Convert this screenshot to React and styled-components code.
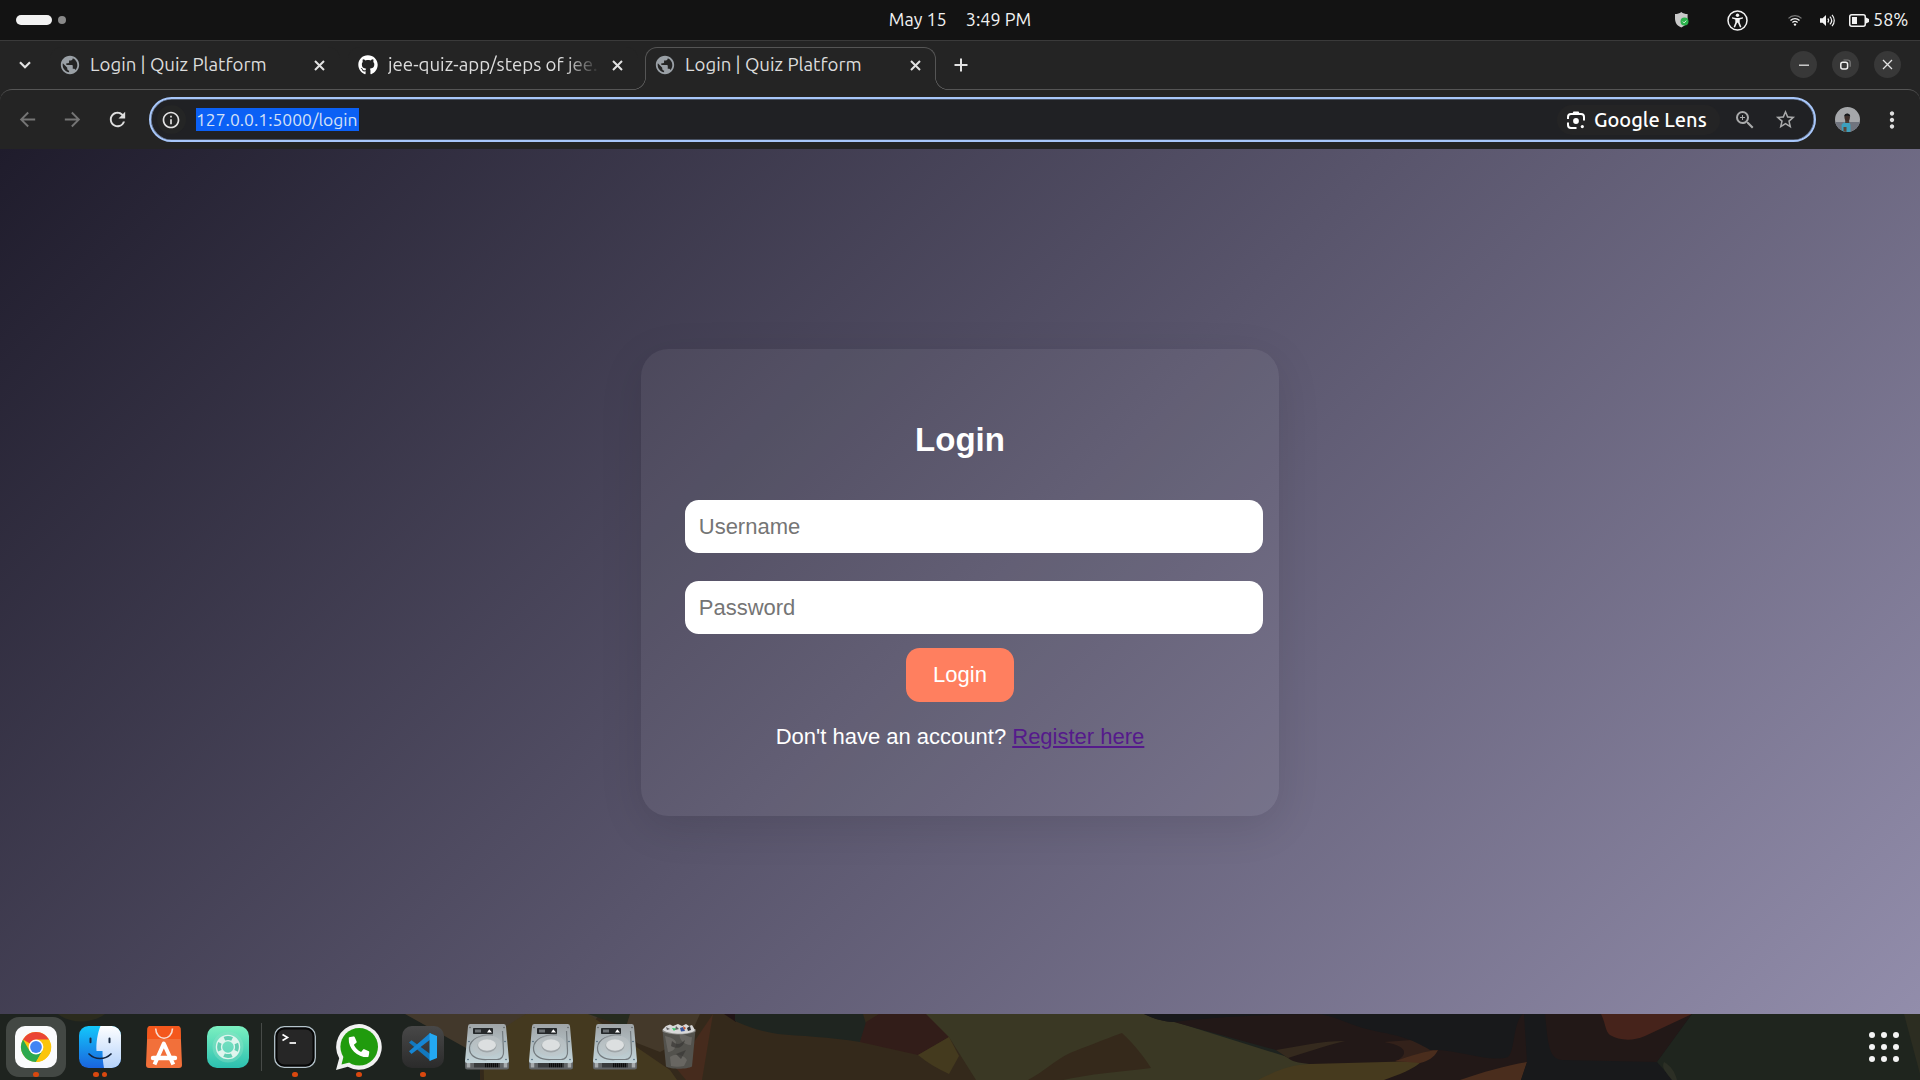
import React from "react";
import styled, { createGlobalStyle } from "styled-components";
import {
  MdArrowBack, MdArrowForward, MdRefresh, MdPublic, MdInfoOutline,
  MdZoomIn, MdStarOutline, MdMoreVert,
} from "react-icons/md";
import { FaGithub, FaPhoneAlt } from "react-icons/fa";

const Global = createGlobalStyle`
  html, body { margin: 0; padding: 0; background: #1e231f; overflow: hidden; }
  *, *::before, *::after { box-sizing: border-box; }
  svg { display: block; flex: none; }
`;

const Screen = styled.div`
  display: flex;
  flex-direction: column;
  width: 1920px;
  height: 1080px;
  overflow: hidden;
  font-family: Ubuntu, "Noto Sans", sans-serif;
  color: #dedede;
`;

/* ---------- system bar ---------- */
const TopBar = styled.header`
  display: grid;
  grid-template-columns: 1fr auto 1fr;
  align-items: center;
  height: 41px;
  flex: none;
  background: #131313;
  border-bottom: 1px solid #3a3a3a;
`;
const Workspaces = styled.div`
  display: flex;
  align-items: center;
  gap: 6px;
  padding-left: 16px;
`;
const Workspace = styled.span`
  width: ${(p) => (p.$current ? 36 : 8)}px;
  height: ${(p) => (p.$current ? 10 : 8)}px;
  border-radius: 5px;
  background: ${(p) => (p.$current ? "#f2f2f2" : "#8a8a8a")};
`;
const Clock = styled.div`
  display: flex;
  gap: 19px;
  padding-bottom: 2px;
  font-size: 18px;
  line-height: 24px;
  color: #f2f2f2;
`;
const ClockPart = styled.span`
  white-space: nowrap;
`;
const Tray = styled.div`
  display: flex;
  align-items: center;
  justify-content: flex-end;
  padding-right: 12px;
  color: #f2f2f2;
`;
const TrayItem = styled.span`
  display: flex;
  margin-right: ${(p) => p.$gap}px;
`;
const Percent = styled.span`
  width: 35px;
  padding-bottom: 2px;
  font-size: 18px;
  line-height: 24px;
  white-space: nowrap;
`;

/* ---------- tab strip ---------- */
const TabStrip = styled.div`
  display: flex;
  align-items: flex-start;
  height: 48px;
  flex: none;
  padding-top: 6px;
  background: #242424;
`;
const TabSearch = styled.div`
  display: flex;
  align-items: center;
  justify-content: center;
  width: 50px;
  height: 36px;
`;
const Tab = styled.div`
  position: relative;
  display: flex;
  align-items: center;
  width: ${(p) => (p.$active ? 291 : 290)}px;
  height: ${(p) => (p.$active ? 43 : 42)}px;
  margin-right: ${(p) => p.$gap || 0}px;
  padding: 0 14px ${(p) => (p.$active ? 8 : 7)}px 9px;
  border: 1px solid ${(p) => (p.$active ? "#555555" : "transparent")};
  border-bottom: 0;
  border-radius: 12px 12px 0 0;
  background: #242424;
  z-index: ${(p) => (p.$active ? 2 : 0)};

  &::before,
  &::after {
    content: "";
    display: ${(p) => (p.$active ? "block" : "none")};
    position: absolute;
    bottom: 0;
    width: 13px;
    height: 13px;
  }
  &::before {
    left: -13px;
    background: radial-gradient(circle at 0 0, #242424 11.8px, #555555 12.3px, #555555 12.7px, #242424 13.2px);
  }
  &::after {
    right: -13px;
    background: radial-gradient(circle at 100% 0, #242424 11.8px, #555555 12.3px, #555555 12.7px, #242424 13.2px);
  }
`;
const Favicon = styled.span`
  display: flex;
  justify-content: center;
  width: 20px;
  flex: none;
  color: ${(p) => p.$color};
`;
const TabTitle = styled.span`
  flex: 1;
  margin: 0 10px;
  overflow: hidden;
  white-space: nowrap;
  font-size: 18.67px;
  line-height: 26px;
  color: #dcdcdc;
  mask-image: ${(p) => (p.$fade ? "linear-gradient(90deg, #000 83%, transparent 99%)" : "none")};
`;
const NewTab = styled.div`
  display: flex;
  align-items: center;
  height: 36px;
  padding-left: 18px;
`;
const WindowButtons = styled.div`
  display: flex;
  align-items: center;
  gap: 15px;
  height: 35px;
  margin-left: auto;
  padding-right: 19px;
`;
const WindowButton = styled.span`
  display: flex;
  align-items: center;
  justify-content: center;
  width: 27px;
  height: 27px;
  border-radius: 50%;
  background: #383838;
`;

/* ---------- toolbar ---------- */
const ToolbarBack = styled.div`
  background: #242424;
  flex: none;
`;
const Toolbar = styled.div`
  display: flex;
  align-items: center;
  height: 60px;
  padding: 0 0 0 16px;
  border: 1px solid #555555;
  border-width: 1px 0 0;
  border-radius: 12px 12px 0 0;
`;
const NavIcon = styled.span`
  display: flex;
  flex: none;
  width: 24px;
  margin-right: ${(p) => p.$gap}px;
  color: ${(p) => (p.$off ? "#757575" : "#dedede")};
`;
const Omnibox = styled.div`
  display: flex;
  align-items: center;
  flex: none;
  width: 1667px;
  height: 45px;
  padding: 0 17px 0 6px;
  border: 2px solid #a8c7fa;
  border-radius: 23px;
  background: #202124;
  box-shadow: inset 0 0 0 0.6px rgba(168, 199, 250, 0.6);
`;
const SiteInfo = styled.span`
  display: flex;
  align-items: center;
  justify-content: center;
  width: 29px;
  height: 29px;
  margin-right: 10px;
  padding-right: 1px;
  border-radius: 50%;
  background: #242525;
`;
const Url = styled.span`
  width: 163px;
  height: 23px;
  background: #0b60f5;
  color: #d5e1f7;
  font-size: 17.5px;
  line-height: 23px;
  white-space: nowrap;
`;
const LensChip = styled.span`
  display: flex;
  align-items: center;
  gap: 9px;
  width: 163px;
  height: 30px;
  margin-left: auto;
  margin-right: 13px;
  padding-left: 10px;
  border-radius: 15px;
  background: #242425;
  color: #ffffff;
  font-size: 20px;
  font-weight: 500;
  white-space: nowrap;
`;
const OmniIcon = styled.span`
  display: flex;
  margin-left: ${(p) => p.$gap || 0}px;
  color: #a9aaab;
`;
const Avatar = styled.span`
  display: flex;
  flex: none;
  width: 25px;
  height: 25px;
  margin-left: 19px;
  border-radius: 50%;
  overflow: hidden;
`;
const Menu = styled.span`
  display: flex;
  margin-left: 19px;
  color: #dedede;
`;

/* ---------- page ---------- */
const Page = styled.main`
  display: flex;
  align-items: center;
  justify-content: center;
  flex: 1;
  padding-top: 2px;
  background: linear-gradient(135deg, #1f1c2c, #928dab);
  font-family: "Liberation Sans", Arial, sans-serif;
  color: #ffffff;
`;
const Card = styled.section`
  width: 638px;
  height: 467px;
  padding: 44px;
  border-radius: 27.5px;
  background: rgba(255, 255, 255, 0.055);
  box-shadow: 0 11px 44px rgba(0, 0, 0, 0.1);
  text-align: center;
`;
const Heading = styled.h2`
  margin: 28.4px 0 26.4px;
  font-size: 33px;
  line-height: 38px;
`;
const Field = styled.input`
  display: block;
  box-sizing: content-box;
  width: 100%;
  height: 25px;
  margin: ${(p) => p.$top}px 0 0;
  padding: 15px 13.75px 13px;
  border: 0;
  border-radius: 13.75px;
  background: #ffffff;
  font: 22px "Liberation Sans", Arial, sans-serif;
  &::placeholder { color: #757575; opacity: 1; }
`;
const Submit = styled.button`
  height: 54px;
  margin-top: 14px;
  padding: 0 27px;
  border: 0;
  border-radius: 13.75px;
  background: #ff7f5f;
  color: #ffffff;
  font: 22px "Liberation Sans", Arial, sans-serif;
`;
const Note = styled.p`
  margin: 22px 0 0;
  font-size: 22px;
  line-height: 25px;
`;
const Link = styled.a`
  color: #551a8b;
  text-decoration: underline;
`;

/* ---------- dock ---------- */
const Dock = styled.footer`
  position: relative;
  display: flex;
  align-items: stretch;
  height: 66px;
  flex: none;
  padding: 0 17px 0 4px;
  background: #1e231f;
`;
const Wallpaper = styled.svg`
  position: absolute;
  inset: 0;
`;
const DockItem = styled.div`
  position: relative;
  display: flex;
  flex-direction: column;
  align-items: center;
  width: 60px;
  height: 60px;
  margin: 3px 2px;
  padding-top: 6px;
  border-radius: 13px;
  background: ${(p) => (p.$focused ? "rgba(255,255,255,0.17)" : "transparent")};
`;
const IconBox = styled.span`
  display: flex;
  justify-content: center;
  height: 45.5px;
  padding-top: ${(p) => (p.$tall ? 1 : 3)}px;
  margin-bottom: 3px;
`;
const Dots = styled.span`
  display: flex;
  gap: 3px;
`;
const Dot = styled.span`
  width: 5.5px;
  height: 5.5px;
  border-radius: 50%;
  background: #d9480f;
`;
const Separator = styled.span`
  position: relative;
  width: 1px;
  height: 48px;
  margin: 9px 1px 0;
  background: #474b48;
`;
const AppGrid = styled.span`
  position: relative;
  display: grid;
  grid-template-columns: repeat(3, 6px);
  gap: 6.2px;
  align-content: center;
  margin-left: auto;
  padding-right: 4px;
`;
const GridDot = styled.span`
  width: 6px;
  height: 6px;
  border-radius: 50%;
  background: #f4f4f4;
`;

/* ---------- drawings ---------- */
const Cross = ({ size = 11, w = 2 }) => (
  <svg width={size} height={size} viewBox="0 0 11 11" stroke="#e2e2e2" strokeWidth={w} fill="none">
    <path d="M1 1 10 10M10 1 1 10" />
  </svg>
);

const Shield = () => (
  <svg width="14" height="16" viewBox="0 0 14 16">
    <path d="M6.3 0C4.600 1.400 2.400 2 0 2v4.500C0 11 2.500 14 6.300 15.500 10 14 12.600 11 12.600 6.500V2C10.200 2 8 1.400 6.300 0Z" fill="#c9c9c9" />
    <circle cx="9.500" cy="9.600" r="4" fill="#2bb24c" />
    <path d="m7.800 9.600 1.300 1.300 2.200-2.300" stroke="#d8f5de" fill="none" />
  </svg>
);
const Access = () => (
  <svg width="21" height="21" viewBox="0 0 21 21">
    <circle cx="10.500" cy="10.500" r="9.500" fill="none" stroke="#f2f2f2" strokeWidth="1.500" />
    <circle cx="10.500" cy="5.300" r="1.700" fill="#f2f2f2" />
    <path d="M5 7.300 9 8.100h3L16 7.300v1.300l-3.300.9v3l1.700 4.400-1.400.5-2.100-4.600h-.8L8 17.400l-1.400-.5 1.700-4.400v-3L5 8.600Z" fill="#f2f2f2" />
  </svg>
);
const Wifi = () => (
  <svg width="14" height="11" viewBox="0 0 14 11" fill="none" strokeWidth="1.300">
    <path d="M.5 3.400C4-.2 10-.2 13.500 3.400" stroke="#777" />
    <path d="M2.500 5.500C5 3 9 3 11.500 5.500" stroke="#f2f2f2" />
    <path d="M4.400 7.600c1.500-1.400 3.700-1.400 5.200 0" stroke="#f2f2f2" />
    <circle cx="7" cy="9.600" r="1.200" fill="#f2f2f2" />
  </svg>
);
const Volume = () => (
  <svg width="15" height="13" viewBox="0 0 15 13" fill="none" stroke="#f2f2f2" strokeWidth="1.200">
    <path d="M0 4.200h2.600L6 1v11L2.600 8.800H0Z" fill="#f2f2f2" stroke="none" />
    <path d="M7.800 4.500c1 1.200 1 2.800 0 4M9.900 2.600c2.100 2.300 2.100 5.500 0 7.800M12 .8c3 3.300 3 8.100 0 11.400" />
  </svg>
);
const Battery = () => (
  <svg width="20" height="13" viewBox="0 0 20 13">
    <rect x=".75" y=".75" width="15.500" height="11.500" rx="2" fill="none" stroke="#f2f2f2" strokeWidth="1.500" />
    <rect x="3" y="3" width="5" height="7" fill="#f2f2f2" />
    <path d="M17 3.500 20 5v3l-3 1.500Z" fill="#f2f2f2" />
  </svg>
);
const LensIcon = () => (
  <svg width="18" height="18" viewBox="0 0 18 18" fill="none" stroke="#fff" strokeWidth="2">
    <path d="M1 8V6a3 3 0 0 1 3-3h10a3 3 0 0 1 3 3v3.500M1 11.500V14a3 3 0 0 0 3 3h5.500" />
    <path d="M6.500.6h5L13 3H5Z" fill="#fff" stroke="none" />
    <circle cx="9" cy="10" r="2.900" fill="#fff" stroke="none" />
    <circle cx="15.300" cy="15.600" r="1.600" fill="#fff" stroke="none" />
  </svg>
);
const AvatarPicture = () => (
  <svg width="25" height="25" viewBox="0 0 25 25">
    <rect width="25" height="25" fill="#a5a7aa" />
    <rect y="15" width="25" height="10" fill="#70747e" />
    <path d="M7 25 6.500 18c1-2 3-3 5.500-3s3.500 1.500 3.500 4v6Z" fill="#3da0bd" />
    <path d="M8.500 20h3v5h-3z" fill="#5d4436" />
    <path d="M10.200 12h4v4h-4z" fill="#4c382f" />
    <ellipse cx="12.200" cy="10.300" rx="2.700" ry="3.600" fill="#3d2f2b" />
    <path d="M9.200 9.500C9 5.500 15.500 5.500 15.200 9.500L12 8.500Z" fill="#17191c" />
  </svg>
);

const ChromeIcon = () => (
  <svg width="42" height="42" viewBox="0 0 42 42">
    <rect width="42" height="42" rx="10" fill="#fafbfd" />
    <circle cx="21" cy="21" r="15" fill="#fbc50a" />
    <path d="M21 21 8 13.500A15 15 0 0 1 34 13.500Z" fill="#ea4535" />
    <path d="M21 13.500H34A15 15 0 0 1 36 21l-8-4Z" fill="#fbc50a" />
    <path d="M8 13.500A15 15 0 0 0 21 36l6.500-11.300H21L14.500 24.700Z" fill="#2da94f" />
    <path d="M36 18a15 15 0 0 1-15 18l6.500-11.500L27 16Z" fill="#fbc50a" />
    <circle cx="21" cy="21" r="7.400" fill="#fff" />
    <circle cx="21" cy="21" r="5.900" fill="#4284f4" />
  </svg>
);
const FinderIcon = () => (
  <svg width="42" height="42" viewBox="0 0 42 42">
    <defs>
      <linearGradient id="fb" x1="0" y1="0" x2="0" y2="1"><stop stopColor="#13c7fb" /><stop offset="1" stopColor="#1a64de" /></linearGradient>
      <linearGradient id="fw" x1="0" y1="0" x2="0" y2="1"><stop stopColor="#fdfeff" /><stop offset="1" stopColor="#b4d2fb" /></linearGradient>
    </defs>
    <rect width="42" height="42" rx="9.500" fill="url(#fb)" />
    <path d="M21.500 0H32.500A9.500 9.500 0 0 1 42 9.500v23A9.500 9.500 0 0 1 32.500 42H25C24 37 23.500 31 23.500 25H17.500C17 17 18.500 7 21.500 0Z" fill="url(#fw)" />
    <path d="M11.500 12.500v3.800M30.500 12.500v3.800" stroke="#1b2c44" strokeWidth="2" strokeLinecap="round" />
    <path d="M10 28c6 6 16 6 22 0" stroke="#13233c" strokeWidth="1.700" fill="none" strokeLinecap="round" />
  </svg>
);
const StoreIcon = () => (
  <svg width="36" height="42" viewBox="0 0 36 42">
    <path d="M4.500 0h27a3 3 0 0 1 3 2.700L36 39a3 3 0 0 1-3 3H3a3 3 0 0 1-3-3L1.500 2.700A3 3 0 0 1 4.500 0Z" fill="#f2703a" />
    <path d="M4.500 0h27a3 3 0 0 1 3 2.700L35 13H1L1.500 2.700A3 3 0 0 1 4.500 0Z" fill="#f4571c" />
    <path d="M9.700 2.500C10 15.500 26 15.500 26.500 2.500" stroke="#f8dccf" strokeWidth="1.600" fill="none" />
    <path d="M8.500 38.500 17.800 17.500l9.500 21" stroke="#fff" strokeWidth="4" fill="none" strokeLinejoin="round" />
    <path d="M7 32h22" stroke="#fff" strokeWidth="4.400" strokeLinecap="round" />
  </svg>
);
const HelpIcon = () => (
  <svg width="42" height="42" viewBox="0 0 42 42">
    <defs><linearGradient id="hg" x1="0" y1="0" x2="0" y2="1"><stop stopColor="#7cf0c0" /><stop offset="1" stopColor="#2cc0b0" /></linearGradient></defs>
    <rect width="42" height="42" rx="10" fill="url(#hg)" />
    <circle cx="21" cy="21" r="15.500" fill="#8fe0c8" opacity=".4" />
    <circle cx="21" cy="21" r="9" fill="none" stroke="#dff5ee" strokeWidth="6.500" />
    <circle cx="21" cy="21" r="9" fill="none" stroke="#63ceb2" strokeWidth="3.800" strokeDasharray="8 6.137" strokeDashoffset="4" />
  </svg>
);
const TerminalIcon = () => (
  <svg width="42" height="42" viewBox="0 0 42 42">
    <rect x=".7" y=".7" width="40.600" height="40.600" rx="9.500" fill="#060606" stroke="#b4c3cb" strokeWidth="1.300" />
    <rect x="3.500" y="3.500" width="35" height="35" rx="7" fill="#262626" />
    <path d="m8.500 8.500 5 3-5 3" fill="none" stroke="#fff" strokeWidth="1.700" />
    <path d="M15.500 17h6.500" stroke="#fff" strokeWidth="1.700" />
  </svg>
);
const WhatsAppIcon = () => (
  <svg width="46" height="46" viewBox="0 0 46 46">
    <path d="M0 46 3.200 34.300A22.800 22.800 0 1 1 11.800 42.800Z" fill="#f2f2f2" />
    <circle cx="23.200" cy="22.800" r="18.800" fill="#209b0d" />
    <path d="m5.500 40.500 2-8 6 6Z" fill="#209b0d" />
    <g transform="translate(12.500 12.300)">
      <FaPhoneAlt size={21} color="#fff" />
    </g>
  </svg>
);
const CodeIcon = () => (
  <svg width="42" height="42" viewBox="0 0 42 42">
    <defs><linearGradient id="vg" x1="0" y1="0" x2="0" y2="1"><stop stopColor="#484848" /><stop offset="1" stopColor="#2b2b2b" /></linearGradient></defs>
    <rect width="42" height="42" rx="10" fill="url(#vg)" />
    <path d="m7 16.500 2.500-2.300L29 28.500V34.500L27.500 34Z" fill="#1278be" />
    <path d="M7 25.300 9.500 28 29 13V7L27.500 7.500Z" fill="#1686d3" />
    <path d="m27.500 7 7.500 3v22l-7.500 3v-6.500V13.500Z" fill="#23a8f2" />
  </svg>
);
const DiskIcon = ({ id }) => (
  <svg width="44" height="46" viewBox="0 0 44 46">
    <defs>
      <linearGradient id={id} x1="0" y1="0" x2="0" y2="1"><stop stopColor="#9fa4a7" /><stop offset="1" stopColor="#c3d5da" /></linearGradient>
    </defs>
    <path d="M0 37h44v6a2.500 2.500 0 0 1-2.500 2.500h-39A2.500 2.500 0 0 1 0 43Z" fill="#626567" />
    <path d="M5.500 0h33A2.500 2.500 0 0 1 41 2.300L44 37a2 2 0 0 1-2 2H2a2 2 0 0 1-2-2L3 2.300A2.500 2.500 0 0 1 5.500 0Z" fill={`url(#${id})`} />
    <rect x="8" y="4" width="20" height="6" rx=".8" fill="#25282a" />
    <rect x="10" y="5.500" width="6" height="3" fill="#6c7174" />
    <path d="m22 8.500 2.300-3.300L27 8.500Z" fill="#fff" />
    <path d="M28 11C16 10 5 15 4.500 23.500S12 36 22 35.500h10c5 0 7-4 6.500-9L37.500 7" fill="none" stroke="#747b7f" strokeWidth="1.200" />
    <ellipse cx="22" cy="21.500" rx="15" ry="10.500" fill="#c1c6c8" opacity=".45" />
    <ellipse cx="22" cy="22" rx="9.500" ry="6.500" fill="#9fa5a8" />
    <ellipse cx="22" cy="21" rx="9" ry="5.700" fill="#dcdfe0" />
    <circle cx="5" cy="3.500" r=".8" fill="#5d6265" /><circle cx="39" cy="3.500" r=".8" fill="#5d6265" />
    <circle cx="4" cy="17.500" r=".8" fill="#4b6578" /><circle cx="40" cy="17.500" r=".8" fill="#4b6578" />
    <circle cx="3" cy="35.500" r=".8" fill="#4b6578" /><circle cx="41" cy="35.500" r=".8" fill="#4b6578" />
    <rect x="9" y="39" width="26" height="4.500" fill="#393b3c" />
    <path d="M20 41.200h13" stroke="#0c0c0c" strokeWidth="4" strokeDasharray="1.300 .7" />
    <path d="M3.500 39v4.500M40.500 39v4.500" stroke="#a7abad" strokeWidth="3.500" />
  </svg>
);
const TrashIcon = () => (
  <svg width="34" height="45" viewBox="0 0 34 45">
    <path d="M.5 6h33L30 42.500C25 45.500 9 45.500 4 42.500Z" fill="#53524d" />
    <path d="M3 12c8 2 12 4 11 9s-5 7-8 7ZM18 9c6 2 10 5 12 4l-1 8C22 21 16 15 18 9ZM8 33c6-4 14-2 17 3l-3 6c-5 1-9 1-13 0Z" fill="#77756f" opacity=".6" />
    <path d="M10 17c5 5 9 3 13-1-2 9-9 9-14 6ZM14 30l10-4-5 9Z" fill="#393834" opacity=".7" />
    <path d="M.5 5c7 4 26 4 33 0v2.500c-7 4-26 4-33 0Z" fill="#8c8c88" />
    <path d="m1 5 3-3 4-1.500L11 2l5-2 4 2 4-2 3 2 3-1 3 5c-4 5-25 5-32 0Z" fill="#d8d8d8" />
    <path d="m4 3 4 2-3 1ZM14 2l3 3-4 1Z" fill="#626262" />
    <path d="m10 4 4 .5-2 2.500Z" fill="#36cc6d" /><path d="m18 4 3-1 2 4-4 .5Z" fill="#38559b" />
    <path d="m21 2 3 2-2 2Z" fill="#c8562d" /><path d="m25 4 3-2 1 4-3 1Z" fill="#303030" />
  </svg>
);

const DOCK_SHAPES = [
  ["#2b2b1d", "M58 0H105C92 10 70 10 58 0Z"],
  ["#34291b", "M480 0H980V66H480Z"],
  ["#42382b", "M405 0H600L560 50 484 44Z"],
  ["#44391f", "M526 0H588L670 56 677 66H484L483 28C500 17 512 8 526 0Z"],
  ["#262b1f", "M588 0H630L626 13Z"],
  ["#44392a", "M630 0H700L690 22 660 38 637 29 626 13Z"],
  ["#462b1d", "M713 0 702 66H686L676 54 694 28Z"],
  ["#201415", "M724 0H736V8Z"],
  ["#1f2520", "M735 0H863L866 10 860 28C830 23 800 22 778 20 763 18 748 13 735 7Z"],
  ["#321d19", "M879 0H927L949 23 918 41 860 28 866 8Z"],
  ["#3a3824", "M926 0H1150L1310 50 1300 66H976L949 23Z"],
  ["#443a1e", "M949 23 959 42 949 60C938 55 928 49 918 41Z"],
  ["#35291b", "M1028 66C1045 57 1055 46 1070 39 1085 33 1103 26 1122 19 1135 31 1144 43 1151 54 1118 58 1090 60 1063 66Z"],
  ["#221817", "M1144 0H1530V66H1384L1340 52 1310 50C1298 49 1291 47 1288 44L1276 36 1174 8C1160 7 1152 4 1144 0Z"],
  ["#18191b", "M1144 0H1340C1280 0 1220 2 1174 8 1160 7 1152 4 1144 0Z"],
  ["#352a1e", "M1276 36C1300 32 1322 27 1345 27 1320 33 1305 39 1288 44Z"],
  ["#33211a", "M1384 28 1412 26 1438 36C1430 42 1415 48 1395 48 1405 43 1413 33 1384 28Z"],
  ["#463a1e", "M1258 66C1280 55 1290 51 1310 50L1422 47C1414 55 1398 61 1384 66Z"],
  ["#4a2d1d", "M1395 47C1411 42 1425 37 1438 36 1434 44 1428 47 1420 49ZM1460 66C1482 58 1508 51 1527 48L1521 66Z"],
  ["#18191b", "M1318 0H1523C1513 8 1515 37 1508 43 1488 49 1459 35 1430 36 1410 24 1400 22 1375 17 1350 12 1340 3 1318 0Z"],
  ["#18191b", "M1524 0H1700V66H1521L1527 48Z"],
  ["#221817", "M1545 0H1692L1657 48 1562 46C1549 45 1548 31 1545 0Z"],
  ["#46231b", "M1601 0H1692L1645 22C1631 28 1619 26 1610 21 1605 17 1606 10 1601 0Z"],
  ["#1f251e", "M1692 0H1920V66H1673L1657 48Z"],
  ["#2c2f25", "M1664 48C1671 52 1675 58 1677 66H1672C1666 58 1661 54 1664 48Z"],
  ["#2c2d21", "M1904 0H1920V60Z"],
];

const DOCK_APPS = [
  { name: "chrome", icon: <ChromeIcon />, running: 1, focused: true },
  { name: "files", icon: <FinderIcon />, running: 2 },
  { name: "store", icon: <StoreIcon />, running: 0 },
  { name: "help", icon: <HelpIcon />, running: 0 },
  { name: "separator" },
  { name: "terminal", icon: <TerminalIcon />, running: 1 },
  { name: "whatsapp", icon: <WhatsAppIcon />, running: 1, tall: true },
  { name: "code", icon: <CodeIcon />, running: 1 },
  { name: "disk1", icon: <DiskIcon id="d1" />, running: 0, tall: true },
  { name: "disk2", icon: <DiskIcon id="d2" />, running: 0, tall: true },
  { name: "disk3", icon: <DiskIcon id="d3" />, running: 0, tall: true },
  { name: "trash", icon: <TrashIcon />, running: 0, tall: true },
];

export default function App() {
  return (
    <Screen>
      <Global />
      <TopBar>
        <Workspaces>
          <Workspace $current />
          <Workspace />
        </Workspaces>
        <Clock>
          <ClockPart>May 15</ClockPart>
          <ClockPart>3:49 PM</ClockPart>
        </Clock>
        <Tray>
          <TrayItem $gap={38}><Shield /></TrayItem>
          <TrayItem $gap={40}><Access /></TrayItem>
          <TrayItem $gap={18}><Wifi /></TrayItem>
          <TrayItem $gap={14}><Volume /></TrayItem>
          <TrayItem $gap={4}><Battery /></TrayItem>
          <Percent>58%</Percent>
        </Tray>
      </TopBar>

      <TabStrip>
        <TabSearch>
          <svg width="12" height="8" viewBox="0 0 12 8" fill="none" stroke="#e2e2e2" strokeWidth="2.200">
            <path d="m1 1.200 5 5 5-5" />
          </svg>
        </TabSearch>
        <Tab $gap={8}>
          <Favicon $color="#9aa0a6"><MdPublic size={22} /></Favicon>
          <TabTitle>Login | Quiz Platform</TabTitle>
          <Cross />
        </Tab>
        <Tab $gap={7}>
          <Favicon $color="#ffffff"><FaGithub size={20} /></Favicon>
          <TabTitle $fade>jee-quiz-app/steps of jee.</TabTitle>
          <Cross />
        </Tab>
        <Tab $active>
          <Favicon $color="#9aa0a6"><MdPublic size={22} /></Favicon>
          <TabTitle>Login | Quiz Platform</TabTitle>
          <Cross />
        </Tab>
        <NewTab>
          <svg width="14" height="14" viewBox="0 0 14 14" stroke="#e2e2e2" strokeWidth="2"><path d="M7 .5v13M.5 7h13" /></svg>
        </NewTab>
        <WindowButtons>
          <WindowButton>
            <svg width="10" height="2" viewBox="0 0 10 2"><path d="M0 1.200h10" stroke="#e2e2e2" strokeWidth="1.300" /></svg>
          </WindowButton>
          <WindowButton>
            <svg width="11" height="11" viewBox="0 0 11 11" fill="none">
              <path d="M3.500 1h4A2.700 2.700 0 0 1 10.200 3.700v4" stroke="#7c7c7c" strokeWidth="1.200" />
              <rect x=".8" y="3.200" width="6.800" height="6.800" rx="2" stroke="#f0f0f0" strokeWidth="1.500" />
            </svg>
          </WindowButton>
          <WindowButton><Cross size={11} w={1.300} /></WindowButton>
        </WindowButtons>
      </TabStrip>

      <ToolbarBack>
        <Toolbar>
          <NavIcon $off $gap={21}><MdArrowBack size={23} /></NavIcon>
          <NavIcon $off $gap={21}><MdArrowForward size={23} /></NavIcon>
          <NavIcon $gap={19}><MdRefresh size={23} /></NavIcon>
          <Omnibox>
            <SiteInfo><MdInfoOutline size={20} color="#e3e3e3" /></SiteInfo>
            <Url>127.0.0.1:5000/login</Url>
            <LensChip><LensIcon />Google Lens</LensChip>
            <OmniIcon><MdZoomIn size={24} /></OmniIcon>
            <OmniIcon $gap={17}><MdStarOutline size={23} /></OmniIcon>
          </Omnibox>
          <Avatar><AvatarPicture /></Avatar>
          <Menu><MdMoreVert size={26} /></Menu>
        </Toolbar>
      </ToolbarBack>

      <Page>
        <Card>
          <Heading>Login</Heading>
          <Field $top={40.2} placeholder="Username" />
          <Field $top={28} placeholder="Password" type="password" />
          <Submit>Login</Submit>
          <Note>Don't have an account? <Link>Register here</Link></Note>
        </Card>
      </Page>

      <Dock>
        <Wallpaper width="1920" height="66" viewBox="0 0 1920 66">
          {DOCK_SHAPES.map(([fill, d], i) => <path key={i} fill={fill} d={d} />)}
        </Wallpaper>
        {DOCK_APPS.map((app) =>
          app.name === "separator" ? (
            <Separator key={app.name} />
          ) : (
            <DockItem key={app.name} $focused={app.focused}>
              <IconBox $tall={app.tall}>{app.icon}</IconBox>
              <Dots>
                {Array.from({ length: app.running }, (_, i) => <Dot key={i} />)}
              </Dots>
            </DockItem>
          )
        )}
        <AppGrid>
          {Array.from({ length: 9 }, (_, i) => <GridDot key={i} />)}
        </AppGrid>
      </Dock>
    </Screen>
  );
}
